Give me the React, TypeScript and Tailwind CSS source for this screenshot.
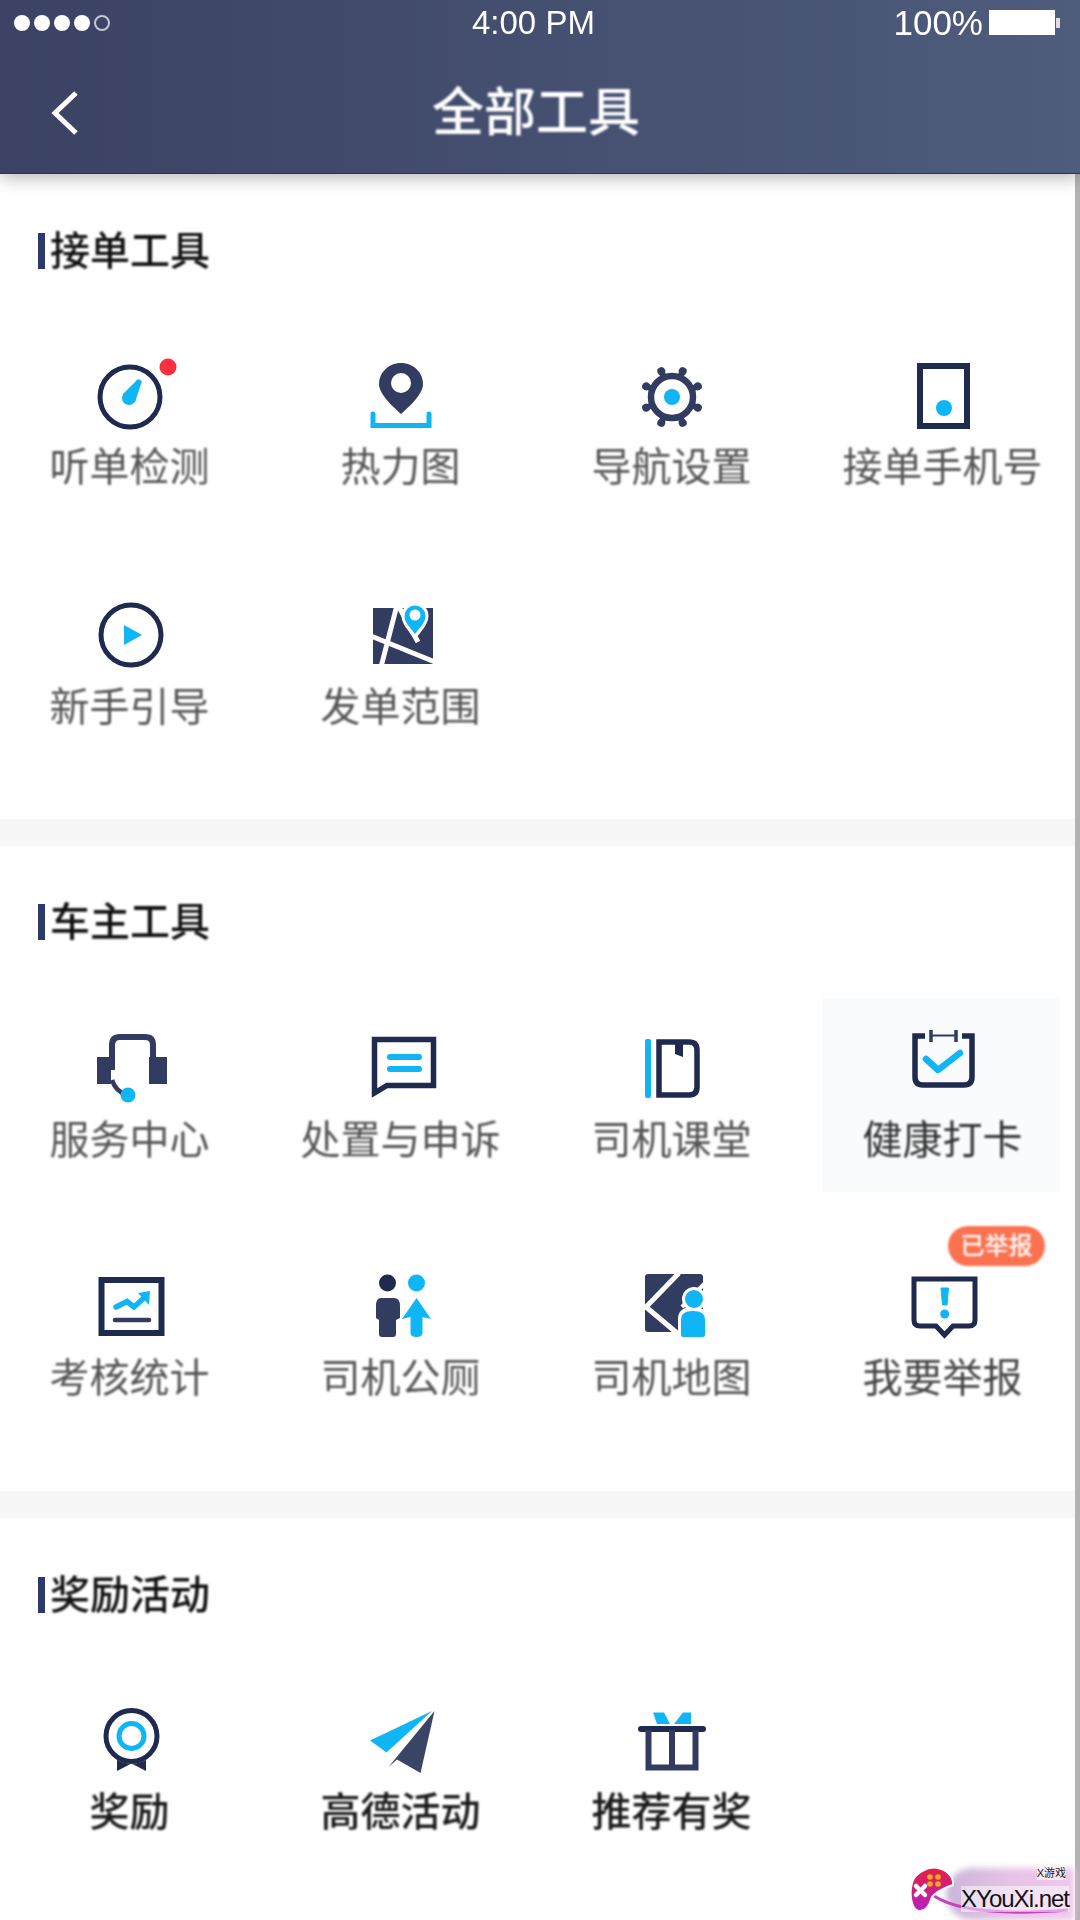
import React from 'react';

const NAVY = '#1f2a4f';
const SLATE = '#323c60';
const BLUE = '#10b5f5';

const Svg: React.FC<{ children: React.ReactNode }> = ({ children }) => (
  <svg width="70" height="70" viewBox="0 0 70 70" fill="none" className="overflow-visible">
    {children}
  </svg>
);

const DialIcon = () => (
  <Svg>
    <circle cx="35" cy="34" r="30" stroke={NAVY} strokeWidth="5" />
    <path d="M43 16 L47 18 L40 39 L28 31 Z" fill={BLUE} />
    <circle cx="34" cy="35" r="7" fill={BLUE} />
    <circle cx="73" cy="4" r="8.5" fill="#f9303f" />
  </Svg>
);

const HeatIcon = () => (
  <Svg>
    <path d="M35 0 C22 0 13 10 13 21 C13 31 26 43 35 51 C44 43 57 31 57 21 C57 10 48 0 35 0 Z" fill={SLATE} />
    <circle cx="35" cy="20" r="10" fill="#fff" />
    <path d="M7 51 V62.5 H63 V51" stroke={BLUE} strokeWidth="5" strokeLinecap="round" />
  </Svg>
);

const GearIcon = () => (
  <Svg>
    {[0, 1, 2, 3, 4, 5, 6, 7].map((i) => (
      <g key={i} transform={`rotate(${22.5 + i * 45} 35 34)`}>
        <line x1="35" y1="11" x2="35" y2="6" stroke={SLATE} strokeWidth="6" />
        <circle cx="35" cy="6" r="4" fill={SLATE} />
      </g>
    ))}
    <circle cx="35" cy="34" r="21" stroke={SLATE} strokeWidth="6.5" />
    <circle cx="35" cy="34" r="8" fill={BLUE} />
  </Svg>
);

const PhoneIcon = () => (
  <Svg>
    <rect x="12" y="3" width="47" height="60" stroke={NAVY} strokeWidth="6" />
    <circle cx="36" cy="45" r="8" fill={BLUE} />
  </Svg>
);

const PlayIcon = () => (
  <Svg>
    <circle cx="36" cy="35" r="30" stroke={NAVY} strokeWidth="5" />
    <path d="M29 25 V45 L47 35 Z" fill={BLUE} />
  </Svg>
);

const RangeIcon = () => (
  <Svg>
    <rect x="7" y="8" width="60" height="56" fill={SLATE} />
    <path d="M31 5 L15 67 M5 36 L69 62 M33 7 L52 42" stroke="#fff" strokeWidth="5" />
    <path d="M49 37 C44 30 37 24 37 16 A12 12 0 0 1 61 16 C61 24 54 30 49 37 Z" fill="#fff" stroke="#fff" strokeWidth="3" />
    <path d="M49 34 C45 28 38.5 23 38.5 16 A10.5 10.5 0 0 1 59.5 16 C59.5 23 53 28 49 34 Z" fill={BLUE} />
    <circle cx="49" cy="15" r="5.5" fill="#fff" />
  </Svg>
);

const HeadsetIcon = () => (
  <Svg>
    <path d="M17 40 V15 Q17 7 25 7 H50 Q58 7 58 15 V40" stroke={SLATE} strokeWidth="6" />
    <rect x="2" y="27" width="14" height="27" fill={SLATE} />
    <rect x="54" y="27" width="18" height="27" fill={SLATE} />
    <path d="M17 50 Q21 62 32 65" stroke={SLATE} strokeWidth="4.5" />
    <circle cx="33" cy="65" r="7.5" fill={BLUE} />
  </Svg>
);

const AppealIcon = () => (
  <Svg>
    <path d="M8.5 9.5 H67.5 V55.5 H21 L8.5 63 Z" stroke={NAVY} strokeWidth="5.5" />
    <path d="M24 27 H53 M24 39 H53" stroke={BLUE} strokeWidth="6" strokeLinecap="round" />
  </Svg>
);

const BookIcon = () => (
  <Svg>
    <rect x="8" y="9" width="6" height="59" rx="2" fill={BLUE} />
    <path d="M22 12 H52 Q60 12 60 20 V57 Q60 65 52 65 H22 Z" stroke={NAVY} strokeWidth="5.5" />
    <path d="M38 14 H46 V27 L38 24 Z" fill={NAVY} />
  </Svg>
);

const CheckinIcon = () => (
  <Svg>
    <path d="M17 6 H7 V47 Q7 55 15 55 H56 Q64 55 64 47 V6 H54" stroke={NAVY} strokeWidth="5.5" />
    <path d="M23 0 V12 M48 0 V12" stroke={SLATE} strokeWidth="3.5" />
    <path d="M23 5.5 H48" stroke={SLATE} strokeWidth="2" />
    <path d="M18 29 L30 40 L52 23" stroke={BLUE} strokeWidth="6.5" strokeLinecap="round" strokeLinejoin="round" />
  </Svg>
);

const ChartIcon = () => (
  <Svg>
    <rect x="6.5" y="7" width="60" height="53" stroke={NAVY} strokeWidth="6" />
    <path d="M21 34 L32 28.5 L39 34 L50 24" stroke={BLUE} strokeWidth="5.5" strokeLinecap="round" />
    <path d="M43 20 L55 18 L54 32 Z" fill={BLUE} />
    <path d="M20 47 H54" stroke={SLATE} strokeWidth="4.5" strokeLinecap="round" />
  </Svg>
);

const RestroomIcon = () => (
  <Svg>
    <circle cx="21.5" cy="10" r="8.5" fill={NAVY} />
    <circle cx="50.5" cy="10" r="8.5" fill={BLUE} />
    <path d="M15 25 H28 Q34 25 34 33 V45 L30 47 V61 Q30 64 27 64 H16 Q13 64 13 61 V47 L10 45 V33 Q10 25 15 25 Z" fill={SLATE} />
    <path d="M50.5 25 L65 46 L56.5 44 V60 Q56.5 64 50.5 64 Q44.5 64 44.5 60 V44 L36 46 Z" fill={BLUE} />
  </Svg>
);

const DriverMapIcon = () => (
  <Svg>
    <rect x="8" y="1" width="58" height="58" rx="3" fill={SLATE} />
    <path d="M42 0 L9 34 L40 60" stroke="#fff" strokeWidth="5" />
    <path d="M68 10 L45 34" stroke="#fff" strokeWidth="4" />
    <path d="M41 64 V46 Q41 34 56 34 Q71 34 71 46 V64 Z" fill="#fff" />
    <circle cx="57" cy="26" r="12" fill="#fff" />
    <circle cx="57" cy="26" r="9" fill={BLUE} />
    <path d="M44 62 V47 Q44 38 56 38 Q68 38 68 47 V62 Q68 64 66 64 H46 Q44 64 44 62 Z" fill={BLUE} />
  </Svg>
);

const ReportIcon = () => (
  <Svg>
    <path d="M6 6 H67 V47 Q67 53 61 53 H45 L36.5 62 L28 53 H12 Q6 53 6 47 Z" stroke={NAVY} strokeWidth="5" />
    <path d="M33 15 H40.5 L39 32 H34.5 Z" fill={BLUE} stroke={BLUE} strokeLinejoin="round" />
    <circle cx="36.7" cy="41" r="4.5" fill={BLUE} />
  </Svg>
);

const MedalIcon = () => (
  <Svg>
    <path d="M22 50 V67 L36.5 59.5 L51 67 V50 Z" fill={NAVY} />
    <circle cx="36.5" cy="32" r="28" fill="#fff" />
    <circle cx="36.5" cy="32" r="25.5" stroke={NAVY} strokeWidth="5" />
    <circle cx="36.5" cy="32" r="12.5" stroke={BLUE} strokeWidth="5" />
  </Svg>
);

const PlaneIcon = () => (
  <Svg>
    <path d="M66 7 L4 36.5 L20.5 48.5 Z" fill={BLUE} />
    <path d="M68.5 7 L22.5 63 L31 55.5 L54.5 69 Z" fill="#3a4566" />
  </Svg>
);

const GiftIcon = () => (
  <Svg>
    <path d="M16 8.5 H27 L33 20 H20 Z M46 8.5 H54 V20 H37 Z" fill={BLUE} />
    <path d="M4 25 H66" stroke={NAVY} strokeWidth="6" strokeLinecap="round" />
    <path d="M11.5 26 V63.5 H58.5 V26 M35 26 V63" stroke={SLATE} strokeWidth="6" />
  </Svg>
);

interface Tool {
  label: string;
  icon: React.ReactNode;
  gap: string;
  tone?: string;
  badge?: string;
  highlight?: boolean;
}

const ToolItem: React.FC<{ tool: Tool }> = ({ tool }) => (
  <div className="relative flex flex-col items-center">
    {tool.highlight && <div className="absolute left-[15px] right-[18px] top-[-32px] bottom-[-26px] bg-[#fafbfd]" />}
    {tool.badge && (
      <span className="absolute right-[33px] top-[-47px] z-10 flex h-[40px] w-[97px] items-center justify-center rounded-full bg-[#fb7250] text-[24px] font-medium leading-none text-white blur-[0.8px]">
        {tool.badge}
      </span>
    )}
    <div className="relative h-[70px] w-[70px] blur-[0.7px]">{tool.icon}</div>
    <div className={`relative text-[40px] leading-[52px] blur-[1px] ${tool.gap} ${tool.tone ?? 'text-[#555555]'}`}>{tool.label}</div>
  </div>
);

const SectionTitle: React.FC<{ title: string }> = ({ title }) => (
  <div className="flex h-[40px] items-center pl-[38px]">
    <span className="h-[36px] w-[7px] bg-[#2c3a6b] blur-[0.5px]" />
    <span className="ml-[5px] text-[40px] font-medium leading-[40px] text-[#111111] blur-[0.8px]">{title}</span>
  </div>
);

const orderTools: Tool[] = [
  { label: '听单检测', icon: <DialIcon />, gap: 'mt-[8px]' },
  { label: '热力图', icon: <HeatIcon />, gap: 'mt-[8px]' },
  { label: '导航设置', icon: <GearIcon />, gap: 'mt-[8px]' },
  { label: '接单手机号', icon: <PhoneIcon />, gap: 'mt-[8px]' },
  { label: '新手引导', icon: <PlayIcon />, gap: 'mt-[11px]' },
  { label: '发单范围', icon: <RangeIcon />, gap: 'mt-[11px]' },
];

const ownerTools: Tool[] = [
  { label: '服务中心', icon: <HeadsetIcon />, gap: 'mt-[14px]' },
  { label: '处置与申诉', icon: <AppealIcon />, gap: 'mt-[14px]' },
  { label: '司机课堂', icon: <BookIcon />, gap: 'mt-[14px]' },
  { label: '健康打卡', icon: <CheckinIcon />, gap: 'mt-[14px]', tone: 'text-[#333333]', highlight: true },
  { label: '考核统计', icon: <ChartIcon />, gap: 'mt-[9px]' },
  { label: '司机公厕', icon: <RestroomIcon />, gap: 'mt-[9px]' },
  { label: '司机地图', icon: <DriverMapIcon />, gap: 'mt-[9px]' },
  { label: '我要举报', icon: <ReportIcon />, gap: 'mt-[9px]', tone: 'text-[#444444]', badge: '已举报' },
];

const rewardTools: Tool[] = [
  { label: '奖励', icon: <MedalIcon />, gap: 'mt-[12px]', tone: 'text-[#1a1a1a] font-medium' },
  { label: '高德活动', icon: <PlaneIcon />, gap: 'mt-[12px]', tone: 'text-[#1a1a1a] font-medium' },
  { label: '推荐有奖', icon: <GiftIcon />, gap: 'mt-[12px]', tone: 'text-[#1a1a1a] font-medium' },
];

const Watermark = () => (
  <div className="absolute bottom-0 right-0 h-[60px] w-[172px]">
    <div className="absolute bottom-0 right-[6px] h-[52px] w-[128px] rounded-l-full bg-gradient-to-r from-[#c9b5d8] via-[#e6c4e6] to-[#f0c8ee] blur-[3px]" />
    <svg width="172" height="60" viewBox="0 0 172 60" fill="none" className="absolute left-0 top-0">
      <defs>
        <linearGradient id="pad" x1="0" y1="0" x2="0" y2="1">
          <stop offset="0" stopColor="#e3203f" />
          <stop offset="1" stopColor="#b91fc4" />
        </linearGradient>
      </defs>
      <path d="M26 36 Q60 58 160 50" stroke="#c93fc0" strokeWidth="3" />
      <path d="M4 23 C6 13 20 6 30 8 C40 10 46 18 45 25 C38 27 28 32 24 37 C22 44 18 52 11 51 C3 50 1 34 4 23 Z" fill="url(#pad)" stroke="#fff" strokeWidth="2" />
      <circle cx="22" cy="17" r="2.8" fill="#f5a81c" />
      <circle cx="30" cy="17" r="2.8" fill="#f5a81c" />
      <circle cx="22" cy="24" r="2.8" fill="#f5a81c" />
      <circle cx="30" cy="24" r="2.8" fill="#f5a81c" />
      <path d="M8 26 L17 35 M17 26 L8 35" stroke="#fff" strokeWidth="4.5" strokeLinecap="round" />
    </svg>
    <span className="absolute right-[14px] top-[6px] bg-white/60 text-[11px] leading-[14px] text-[#222222]">X游戏</span>
    <span className="absolute bottom-[8px] right-[11px] bg-white/50 text-[24px] leading-[26px] tracking-[-1px] text-[#111111]">XYouXi.net</span>
  </div>
);

export default function App() {
  return (
    <div className="relative h-[1920px] w-[1080px] overflow-hidden bg-white font-['Liberation_Sans','Noto_Sans_CJK_SC',sans-serif]">
      <header className="relative z-10 h-[174px] border-b border-[#2a3354] bg-gradient-to-r from-[#3b4263] to-[#4f5c7b] shadow-[0_4px_16px_rgba(0,0,0,0.28)]">
        <div className="relative flex h-[45px] items-center justify-between pl-[14px] pr-[20px] text-white blur-[0.7px]">
          <div className="flex items-center gap-[4px]">
            <span className="h-[16px] w-[16px] rounded-full bg-white" />
            <span className="h-[16px] w-[16px] rounded-full bg-white" />
            <span className="h-[16px] w-[16px] rounded-full bg-white" />
            <span className="h-[16px] w-[16px] rounded-full bg-white" />
            <span className="h-[16px] w-[16px] rounded-full border-2 border-white/70" />
          </div>
          <span className="absolute left-[472px] text-[33px] leading-none">4:00 PM</span>
          <div className="flex items-center gap-[6px]">
            <span className="text-[35px] leading-none">100%</span>
            <span className="h-[25px] w-[66px] bg-white" />
            <span className="ml-[-5px] h-[10px] w-[4px] bg-white/80" />
          </div>
        </div>
        <div className="relative mt-[36px] flex h-[64px] items-center justify-center text-white">
          <svg width="30" height="46" viewBox="0 0 30 46" fill="none" className="absolute left-[50px] blur-[0.5px]">
            <path d="M26 3 L5 23 L26 43" stroke="#fff" strokeWidth="5" />
          </svg>
          <span className="ml-[-8px] text-[52px] font-medium leading-none blur-[0.8px]">全部工具</span>
        </div>
      </header>

      <main className="h-[1746px] overflow-hidden border-r-[5px] border-[#b3b3b3]">
        <section className="pb-[86px] pt-[57px]">
          <SectionTitle title="接单工具" />
          <div className="ml-[-6px] mt-[92px] grid w-[1084px] grid-cols-4 gap-y-[107px]">
            {orderTools.map((tool) => (
              <ToolItem key={tool.label} tool={tool} />
            ))}
          </div>
        </section>

        <div className="h-[27px] bg-[#f7f7f7]" />

        <section className="pb-[87px] pt-[56px]">
          <SectionTitle title="车主工具" />
          <div className="ml-[-6px] mt-[88px] grid w-[1084px] grid-cols-4 gap-y-[107px]">
            {ownerTools.map((tool) => (
              <ToolItem key={tool.label} tool={tool} />
            ))}
          </div>
        </section>

        <div className="h-[27px] bg-[#f7f7f7]" />

        <section className="pt-[57px]">
          <SectionTitle title="奖励活动" />
          <div className="ml-[-6px] mt-[89px] grid w-[1084px] grid-cols-4">
            {rewardTools.map((tool) => (
              <ToolItem key={tool.label} tool={tool} />
            ))}
          </div>
        </section>
      </main>

      <Watermark />
    </div>
  );
}
